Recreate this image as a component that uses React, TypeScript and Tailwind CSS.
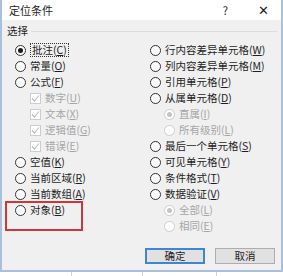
type Item = {
  label: string;
  hotkey: string;
  kind: "radio" | "check";
  checked?: boolean;
  disabled?: boolean;
  sub?: boolean;
  focus?: boolean;
};

const leftItems: Item[] = [
  { label: "批注", hotkey: "C", kind: "radio", checked: true, focus: true },
  { label: "常量", hotkey: "O", kind: "radio" },
  { label: "公式", hotkey: "F", kind: "radio" },
  { label: "数字", hotkey: "U", kind: "check", checked: true, disabled: true, sub: true },
  { label: "文本", hotkey: "X", kind: "check", checked: true, disabled: true, sub: true },
  { label: "逻辑值", hotkey: "G", kind: "check", checked: true, disabled: true, sub: true },
  { label: "错误", hotkey: "E", kind: "check", checked: true, disabled: true, sub: true },
  { label: "空值", hotkey: "K", kind: "radio" },
  { label: "当前区域", hotkey: "R", kind: "radio" },
  { label: "当前数组", hotkey: "A", kind: "radio" },
  { label: "对象", hotkey: "B", kind: "radio" },
];

const rightItems: Item[] = [
  { label: "行内容差异单元格", hotkey: "W", kind: "radio" },
  { label: "列内容差异单元格", hotkey: "M", kind: "radio" },
  { label: "引用单元格", hotkey: "P", kind: "radio" },
  { label: "从属单元格", hotkey: "D", kind: "radio" },
  { label: "直属", hotkey: "I", kind: "radio", checked: true, disabled: true, sub: true },
  { label: "所有级别", hotkey: "L", kind: "radio", disabled: true, sub: true },
  { label: "最后一个单元格", hotkey: "S", kind: "radio" },
  { label: "可见单元格", hotkey: "Y", kind: "radio" },
  { label: "条件格式", hotkey: "T", kind: "radio" },
  { label: "数据验证", hotkey: "V", kind: "radio" },
  { label: "全部", hotkey: "L", kind: "radio", checked: true, disabled: true, sub: true },
  { label: "相同", hotkey: "E", kind: "radio", disabled: true, sub: true },
];

function Radio({ checked, disabled }: { checked?: boolean; disabled?: boolean }) {
  return (
    <span
      className={`flex h-[11px] w-[11px] shrink-0 items-center justify-center rounded-full border bg-white ${
        disabled ? "border-[#cccccc]" : "border-[#333333]"
      }`}
    >
      {checked && (
        <span className={`h-[5px] w-[5px] rounded-full ${disabled ? "bg-[#c4c4c4]" : "bg-[#1a1a1a]"}`} />
      )}
    </span>
  );
}

function Check({ checked }: { checked?: boolean }) {
  return (
    <span className="flex h-[11px] w-[11px] shrink-0 items-center justify-center border border-[#cccccc] bg-white">
      {checked && (
        <svg width="9" height="9" viewBox="0 0 9 9">
          <path d="M1 4.5 L3.5 7 L8 1.5" fill="none" stroke="#b8b8b8" strokeWidth="1.1" />
        </svg>
      )}
    </span>
  );
}

function Row({ item, indent }: { item: Item; indent: string }) {
  return (
    <div className={`flex h-[16px] items-center gap-[4px] ${item.sub ? indent : ""}`}>
      {item.kind === "radio" ? (
        <Radio checked={item.checked} disabled={item.disabled} />
      ) : (
        <Check checked={item.checked} />
      )}
      <span
        className={`whitespace-nowrap leading-none ${item.disabled ? "text-[#a6a6a6]" : "text-[#1e1e1e]"} ${
          item.focus ? "border border-dotted border-[#333333] px-[1px] py-[1px]" : ""
        }`}
      >
        {item.label}(<u>{item.hotkey}</u>)
      </span>
    </div>
  );
}

export default function App() {
  return (
    <div
      className="relative h-[276px] w-[283px] overflow-hidden bg-white text-[10.5px]"
      style={{ fontFamily: '"Noto Sans CJK SC", "Noto Sans", sans-serif' }}
    >
      <div className="flex h-[272px] flex-col border-x-2 border-b-2 border-[#a9c0dc] bg-[#f0f0f0]">
        <div className="flex h-[20px] items-center bg-white pl-[7px] pr-[12px] text-[11px] text-[#1e1e1e]">
          <span>定位条件</span>
          <span className="ml-auto mr-[30px]">?</span>
          <span className="text-[13px] font-light">✕</span>
        </div>

        <div className="mt-[4px] flex h-[14px] items-center gap-[3px] pl-[5px] pr-[4px] text-[#1e1e1e]">
          <span>选择</span>
          <div className="h-px flex-1 bg-[#dcdcdc]" />
        </div>

        <div className="mt-[4px] grid grid-cols-[135px_1fr] pl-[13px]">
          <div className="flex flex-col">
            {leftItems.map((item) => (
              <Row key={item.label} item={item} indent="pl-[15px]" />
            ))}
          </div>
          <div className="flex flex-col">
            {rightItems.map((item) => (
              <Row key={item.label} item={item} indent="pl-[14px]" />
            ))}
          </div>
        </div>

        <div className="mt-[14px] flex justify-end gap-[10px] pr-[6px]">
          <button className="h-[16px] w-[60px] border-2 border-[#3c86d6] bg-[#e1e1e1] text-[10.5px] leading-none text-[#1e1e1e]">
            确定
          </button>
          <button className="h-[16px] w-[60px] border border-[#adadad] bg-[#e1e1e1] text-[10.5px] leading-none text-[#1e1e1e]">
            取消
          </button>
        </div>
      </div>

      <div className="flex h-[4px]">
        <div className="w-[72px] border-r border-[#d0d0d0]" />
        <div className="w-[71px] border-r border-[#d0d0d0]" />
        <div className="w-[74px] border-r border-[#d0d0d0]" />
      </div>

      <div className="absolute left-[5px] top-[201px] h-[30px] w-[78px] border-2 border-[#d2353a]" />
    </div>
  );
}
